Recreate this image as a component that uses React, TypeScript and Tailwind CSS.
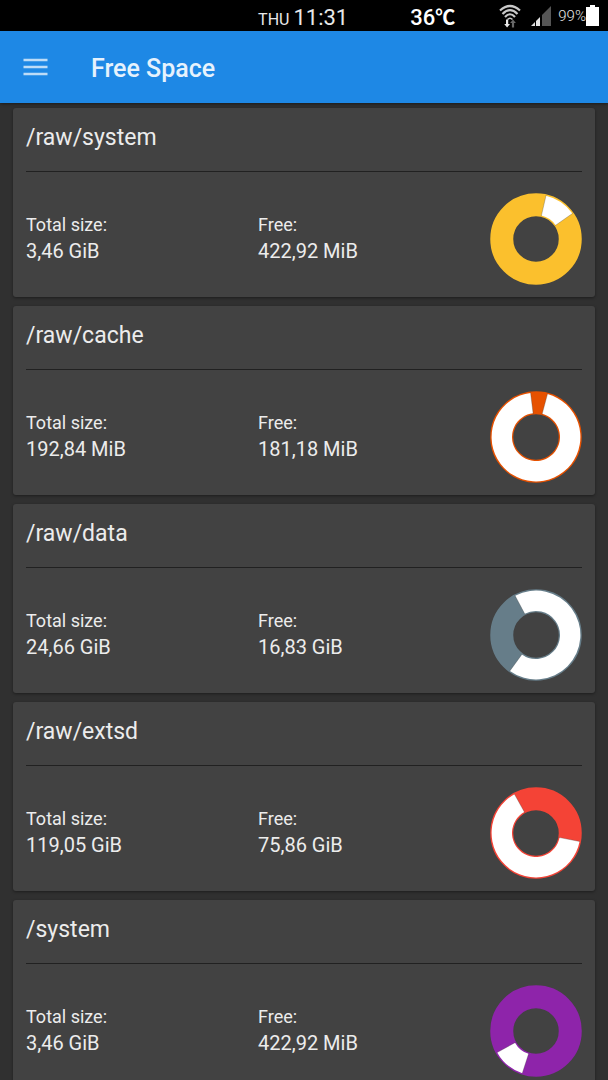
import React from 'react';

interface Volume {
  path: string;
  total: string;
  free: string;
  color: string;
  // free sector, degrees clockwise from the top
  from: number;
  to: number;
}

const volumes: Volume[] = [
  { path: '/raw/system', total: '3,46 GiB', free: '422,92 MiB', color: '#fbc02d', from: 13, to: 55 },
  { path: '/raw/cache', total: '192,84 MiB', free: '181,18 MiB', color: '#e65100', from: 15, to: 353 },
  { path: '/raw/data', total: '24,66 GiB', free: '16,83 GiB', color: '#667d89', from: -28, to: 216 },
  { path: '/raw/extsd', total: '119,05 GiB', free: '75,86 GiB', color: '#f44336', from: 101, to: 331 },
  { path: '/system', total: '3,46 GiB', free: '422,92 MiB', color: '#8e24aa', from: 198, to: 241 },
];

const point = (radius: number, deg: number) => {
  const a = (deg * Math.PI) / 180;
  return `${46 + radius * Math.sin(a)} ${46 - radius * Math.cos(a)}`;
};

const Donut: React.FC<{ color: string; from: number; to: number }> = ({ color, from, to }) => {
  const large = to - from > 180 ? 1 : 0;
  return (
    <svg className="w-[92px] h-[92px] shrink-0" viewBox="0 0 92 92" aria-hidden="true">
      <circle cx="46" cy="46" r="34.25" fill="none" stroke={color} strokeWidth="23" />
      <path
        d={`M${point(44.4, from)} A44.4 44.4 0 ${large} 1 ${point(44.4, to)} L${point(24, to)} A24 24 0 ${large} 0 ${point(24, from)} Z`}
        fill="#fff"
      />
      <path
        d={`M${point(45, from)} L${point(23, from)} M${point(45, to)} L${point(23, to)}`}
        stroke="#424242"
        strokeOpacity="0.5"
        strokeWidth="0.6"
      />
    </svg>
  );
};

const StatusBar: React.FC = () => (
  <div className="h-[31px] bg-black flex items-center justify-end pr-[9px] text-[#e8e8e8]">
    <div className="flex items-baseline mr-[62px] leading-8 pt-1">
      <span className="text-base mr-1">THU</span>
      <span className="text-[22px]">11:31</span>
    </div>
    <span className="text-[22px] font-medium text-white leading-8 mr-[43px] pt-1">
      36<span className="text-xl font-bold font-['Noto_Sans_CJK_SC',sans-serif] leading-none">℃</span>
    </span>
    <svg className="w-6 h-6 mr-2" viewBox="0 0 24 24" fill="none" aria-hidden="true">
      <g stroke="#c8c8c8" strokeWidth="2.2">
        <path d="M2 6.5Q12 -2.5 22 6.5" />
        <path d="M4.5 10Q12 2.5 19.5 10" />
        <path d="M7 13Q12 7.5 17 13" />
        <path d="M9.5 15.5Q12 13 14.5 15.5" strokeWidth="1.6" />
      </g>
      <path d="M8 15.5h2.2v4.5h1.8l-2.9 3.5L6.2 20h1.8z" fill="#e8e8e8" />
      <path d="M13.9 23.5h2.2V19h1.8L15 15.5 12.1 19h1.8z" fill="#686868" />
    </svg>
    <svg className="w-[22px] h-[22px] mr-1.5" viewBox="0 0 22 22" aria-hidden="true">
      <path d="M21 1v20h-9V10z" fill="#555" />
      <path d="M10 12v9H6v-5z" fill="#e4e4e4" />
      <path d="M5 17v4H1z" fill="#ddd" />
    </svg>
    <span className="text-[15px] font-light text-[#e4e4e4] pt-0.5">99%</span>
    <svg className="w-[13px] h-[21px]" viewBox="0 0 13 21" aria-hidden="true">
      <path d="M4 0h5v2h4v19H0V2h4z" fill="#fff" />
    </svg>
  </div>
);

const Toolbar: React.FC = () => (
  <header className="h-[72px] bg-[#1e88e5] flex items-center pl-[23px] shadow-[0_1px_3px_rgba(0,0,0,0.45)]">
    <button type="button" aria-label="Open menu" className="mr-[43px]">
      <svg className="w-[25px] h-[18px] block" viewBox="0 0 25 18" aria-hidden="true">
        <path d="M0.5 2H24.5M0.5 9H24.5M0.5 16H24.5" stroke="#bddcf7" strokeWidth="2.3" />
      </svg>
    </button>
    <h1 className="text-[25px] font-medium text-[#e6f2fd] pt-1">Free Space</h1>
  </header>
);

const VolumeCard: React.FC<{ volume: Volume }> = ({ volume }) => (
  <section className="bg-[#424242] rounded-[3px] px-[13px] pb-3 shadow-[0_1px_3px_rgba(0,0,0,0.4)]">
    <h2 className="h-16 pt-3 text-[23px] leading-9 border-b border-[#212121]">{volume.path}</h2>
    <div className="flex items-center pt-[21px]">
      <dl className="flex-1 grid grid-cols-2">
        <div>
          <dt className="text-lg leading-6">Total size:</dt>
          <dd className="text-xl leading-7">{volume.total}</dd>
        </div>
        <div>
          <dt className="text-lg leading-6">Free:</dt>
          <dd className="text-xl leading-7">{volume.free}</dd>
        </div>
      </dl>
      <Donut color={volume.color} from={volume.from} to={volume.to} />
    </div>
  </section>
);

const App: React.FC = () => {
  return (
    <div className="min-h-screen bg-[#303030] text-[#ececec] font-['Roboto',sans-serif]">
      <StatusBar />
      <Toolbar />
      <main className="flex flex-col gap-[9px] px-[13px] pt-[5px] pb-3">
        {volumes.map((volume) => (
          <VolumeCard key={volume.path} volume={volume} />
        ))}
      </main>
    </div>
  );
};

export default App;
